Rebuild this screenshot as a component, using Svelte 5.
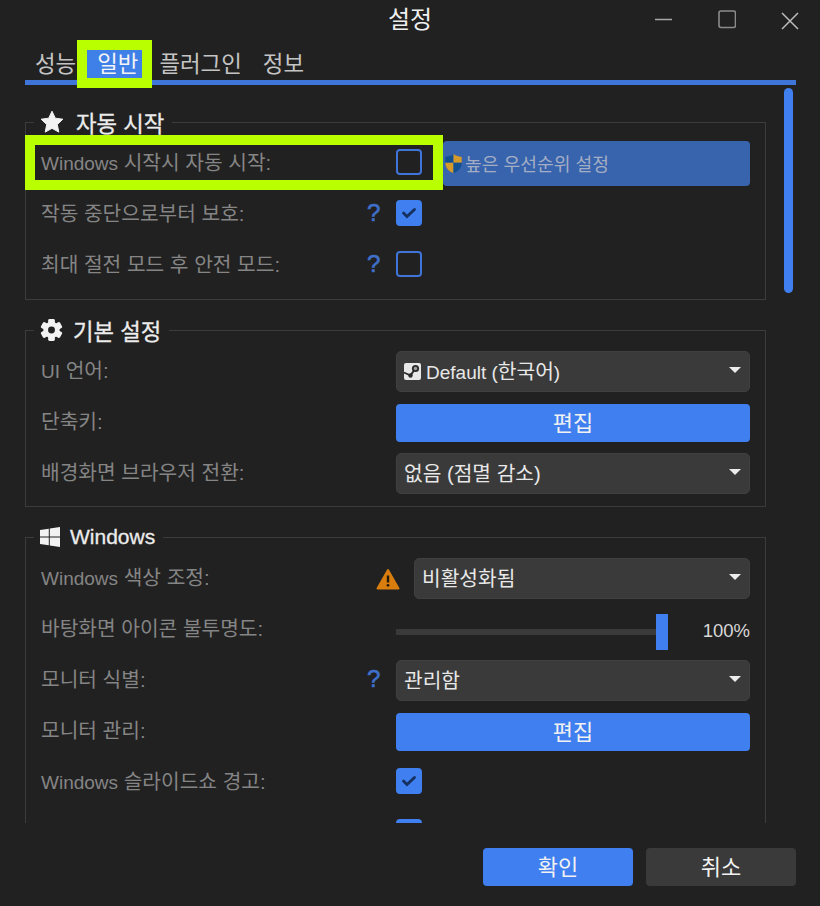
<script>
  const tabs = ["성능", "일반", "플러그인", "정보"]
  let active_tab = 1
</script>

<div class="window">
  <header class="titlebar">
    <span class="title">설정</span>
    <div class="window-buttons">
      <svg width="18" height="20" viewBox="0 0 18 20"><path d="M0 9.500h17" stroke="#a8a8a8" stroke-width="1.500" /></svg>
      <svg width="18" height="20" viewBox="-1 0 18 20"><rect x="0" y="1" width="16.500" height="16.500" rx="2" fill="none" stroke="#8c8c8c" stroke-width="1.600" /></svg>
      <svg width="18" height="20" viewBox="0 0 18 20"><path d="M1 3l16 16M17 3L1 19" stroke="#bdbdbd" stroke-width="1.500" /></svg>
    </div>
  </header>

  <nav class="tabs">
    {#each tabs as tab, i}
      <button class="tab" class:active={i === active_tab} onclick={() => (active_tab = i)}>{tab}</button>
    {/each}
    <span class="mark tab-mark"></span>
  </nav>

  <main class="content">
    <fieldset>
      <legend>
        <svg class="star" width="24" height="24" viewBox="0 0 24 24"><path fill="#f2f2f2" d="M12 1.200l3.300 7 7.600 1-5.600 5.300 1.500 7.600L12 18.300l-6.800 3.800 1.500-7.600L1.100 9.200l7.600-1z" stroke="#f2f2f2" stroke-width="1" stroke-linejoin="round" /></svg>
        자동 시작
      </legend>
      <span class="mark row-mark"></span>
      <div class="row">
        <span class="label"><span class="latin">Windows</span> 시작시 자동 시작:</span>
        <span></span>
        <div class="control spaced">
          <span class="check"></span>
          <button class="btn disabled">
            <svg class="shield" width="19" height="23" viewBox="0 0 22 24">
              <path fill="#12508f" d="M11 1C8 3 5 4 1.500 4.500V11H11z" />
              <path fill="#d49a2a" d="M11 1c3 2 6 3 9.500 3.500V11H11z" />
              <path fill="#d49a2a" d="M1.500 11c0 6 4 10 9.500 12V11z" />
              <path fill="#12508f" d="M20.500 11c0 6-4 10-9.500 12V11z" />
            </svg>
            <span>높은 우선순위 설정</span>
          </button>
        </div>
      </div>
      <div class="row">
        <span class="label">작동 중단으로부터 보호:</span>
        <span class="help">?</span>
        <div class="control"><span class="check on">{@render tick()}</span></div>
      </div>
      <div class="row">
        <span class="label">최대 절전 모드 후 안전 모드:</span>
        <span class="help">?</span>
        <div class="control"><span class="check"></span></div>
      </div>
    </fieldset>

    <fieldset class="tight">
      <legend>
        <svg class="gear" width="23" height="24" viewBox="0 0 24 24">
          {#each [0, 60, 120] as angle}
            <rect x="8.500" y="0.500" width="7" height="23" rx="1.500" fill="#f2f2f2" transform="rotate({angle} 12 12)" />
          {/each}
          <circle cx="12" cy="12" r="8.500" fill="#f2f2f2" />
          <circle cx="12" cy="12" r="3.600" fill="#212121" />
        </svg>
        기본 설정
      </legend>
      <div class="row">
        <span class="label"><span class="latin">UI</span> 언어:</span>
        <span></span>
        <div class="control">
          <div class="select">
            <svg width="17" height="17" viewBox="0 0 17 17">
              <rect width="17" height="17" rx="2" fill="#e8e8e8" />
              <path d="M0 9.500l6.500 3" stroke="#2b2b2b" stroke-width="1.600" />
              <path d="M6.500 12.500L11 6" stroke="#2b2b2b" stroke-width="2" />
              <circle cx="6.500" cy="12.500" r="2.200" fill="#2b2b2b" />
              <circle cx="11.500" cy="5.500" r="3.600" fill="#2b2b2b" />
              <circle cx="11.500" cy="5.500" r="1.700" fill="#a0a0a0" />
            </svg>
            <span class="value"><span class="latin">Default (</span>한국어<span class="latin">)</span></span>
          </div>
        </div>
      </div>
      <div class="row">
        <span class="label">단축키:</span>
        <span></span>
        <div class="control"><button class="btn">편집</button></div>
      </div>
      <div class="row">
        <span class="label">배경화면 브라우저 전환:</span>
        <span></span>
        <div class="control"><div class="select"><span class="value">없음 (점멸 감소)</span></div></div>
      </div>
    </fieldset>

    <fieldset>
      <legend>
        <svg width="20" height="20" viewBox="0 0 20 20"><path fill="#f2f2f2" d="M0 3l8.800-1.300v7.800H0zM9.800 1.600L20 0v9.500H9.800zM0 10.500h8.800v7.800L0 17zM9.800 10.500H20V20L9.800 18.400z" /></svg>
        <span class="legend-latin">Windows</span>
      </legend>
      <div class="row">
        <span class="label"><span class="latin">Windows</span> 색상 조정:</span>
        <div class="control warn-control">
          <svg width="24" height="22" viewBox="0 0 24 22"><path fill="#d97d0e" stroke="#d97d0e" stroke-width="2" stroke-linejoin="round" d="M12 2L1.500 20.500h21z" /><path stroke="#241a0c" stroke-width="2.400" d="M12 7.500v7" /><circle cx="12" cy="17.300" r="1.400" fill="#241a0c" /></svg>
          <div class="select"><span class="value">비활성화됨</span></div>
        </div>
      </div>
      <div class="row">
        <span class="label">바탕화면 아이콘 불투명도:</span>
        <span></span>
        <div class="control slider-control">
          <div class="slider"><span class="thumb"></span></div>
          <span class="percent">100%</span>
        </div>
      </div>
      <div class="row">
        <span class="label">모니터 식별:</span>
        <span class="help">?</span>
        <div class="control"><div class="select"><span class="value">관리함</span></div></div>
      </div>
      <div class="row">
        <span class="label">모니터 관리:</span>
        <span></span>
        <div class="control"><button class="btn">편집</button></div>
      </div>
      <div class="row">
        <span class="label"><span class="latin">Windows</span> 슬라이드쇼 경고:</span>
        <span></span>
        <div class="control"><span class="check on">{@render tick()}</span></div>
      </div>
      <div class="row">
        <span class="label"></span>
        <span></span>
        <div class="control"><span class="check on">{@render tick()}</span></div>
      </div>
    </fieldset>

    <span class="scrollbar"></span>
  </main>

  <footer class="footer">
    <button class="btn action">확인</button>
    <button class="btn action secondary">취소</button>
  </footer>
</div>

{#snippet tick()}
  <svg width="16" height="12" viewBox="0 0 16 12"><path d="M2.500 6l3.500 3.500L13.500 2.500" fill="none" stroke="#16305e" stroke-width="2.800" stroke-linecap="round" /></svg>
{/snippet}

<style>
  :global(body) {
    background: #212121;
  }

  .window {
    width: 820px;
    height: 906px;
    background: #212121;
    display: flex;
    flex-direction: column;
    font-family: "Liberation Sans", "Noto Sans CJK KR", sans-serif;
    font-size: 20.3px;
    color: #e6e6e6;
    overflow: hidden;
  }
  .latin {
    font-size: 19px;
  }

  /* TITLE */

  .titlebar {
    height: 40px;
    flex: none;
    position: relative;
    display: flex;
    justify-content: center;
    align-items: center;
  }
  .title {
    font-size: 24px;
    color: #efefef;
    margin-top: -5px;
  }
  .window-buttons {
    position: absolute;
    right: 21px;
    top: 10px;
    display: flex;
    gap: 45px;
  }

  /* TABS */

  .tabs {
    flex: none;
    position: relative;
    height: 45px;
    margin: 0 24px 0 25px;
    box-sizing: border-box;
    border-bottom: 5px solid #3f74d8;
    display: flex;
    gap: 1px;
    padding-top: 10px;
  }
  .tab {
    all: unset;
    font-size: 22.400px;
    line-height: 30px;
    height: 28px;
    padding: 0 10px;
    color: #c4c4c4;
  }
  .tab.active {
    background: #3f7fe8;
    color: #f4f4f4;
  }
  .mark {
    position: absolute;
    box-sizing: border-box;
    border: 10px solid #b9ff00;
    pointer-events: none;
    z-index: 2;
  }
  .tab-mark {
    left: 52px;
    top: 0;
    width: 75px;
    height: 48px;
  }

  /* CONTENT */

  .content {
    flex: 1;
    min-height: 0;
    position: relative;
    overflow: hidden;
    margin: 0 24px 0 25px;
    padding-top: 23px;
    display: flex;
    flex-direction: column;
    gap: 16px;
  }
  .scrollbar {
    position: absolute;
    left: 759px;
    top: 3px;
    width: 9px;
    height: 205px;
    border-radius: 5px;
    background: #3f7ff0;
  }
  fieldset {
    position: relative;
    flex: none;
    width: 741px;
    box-sizing: border-box;
    margin: 0;
    padding: 2px 15px 8px;
    border: 1px solid #3c3c3c;
    min-inline-size: 0;
  }
  fieldset.tight {
    padding-bottom: 7px;
  }
  legend {
    margin-left: -7px;
    padding: 0 8px 0 6px;
    height: 28px;
    display: flex;
    align-items: center;
    gap: 10px;
    font-size: 22.300px;
    color: #ececec;
    -webkit-text-stroke: 0.3px #ececec;
  }
  .star {
    margin-right: 2px;
  }
  .legend-latin {
    font-size: 21px;
  }
  .row {
    height: 51px;
    display: grid;
    grid-template-columns: 1fr 36px 354px;
    align-items: center;
  }
  .label {
    color: #858585;
    padding-bottom: 5px;
  }
  .help {
    color: #3f6fc8;
    font-size: 24px;
    -webkit-text-stroke: 0.6px #3f6fc8;
    text-align: left;
    padding-left: 7px;
    padding-bottom: 3px;
  }
  .control {
    display: flex;
    align-items: center;
    min-width: 0;
  }
  .spaced {
    gap: 21px;
  }
  .warn-control {
    grid-column: 2 / 4;
    justify-content: flex-end;
    gap: 14px;
  }
  .warn-control .select {
    flex: none;
    width: 336px;
  }
  .slider-control {
    justify-content: space-between;
  }

  /* CONTROLS */

  .check {
    flex: none;
    width: 26px;
    height: 26px;
    margin-bottom: 3px;
    box-sizing: border-box;
    border: 2px solid #3f74d8;
    border-radius: 4px;
    display: flex;
    align-items: center;
    justify-content: center;
  }
  .check.on {
    background: #3f7ff0;
    border-color: #3f7ff0;
  }
  .select {
    position: relative;
    flex: 1;
    height: 41px;
    box-sizing: border-box;
    background: #3a3a3a;
    border: 1px solid #404040;
    border-radius: 5px;
    display: flex;
    align-items: center;
    gap: 5px;
    padding-left: 7px;
  }
  .select::after {
    content: "";
    position: absolute;
    right: 8px;
    top: 15px;
    border-left: 6px solid transparent;
    border-right: 6px solid transparent;
    border-top: 6px solid #ececec;
  }
  .value {
    color: #e8e8e8;
    padding-bottom: 3px;
  }
  .btn {
    all: unset;
    flex: 1;
    height: 38px;
    box-sizing: border-box;
    background: #3f7ff0;
    border-radius: 4px;
    color: #f2f2f2;
    font-size: 22px;
    padding-bottom: 4px;
    display: flex;
    align-items: center;
    justify-content: center;
  }
  .btn.disabled {
    height: 45px;
    background: #3863ad;
    color: #a3aec4;
    font-size: 18.200px;
    padding-bottom: 2px;
    justify-content: flex-start;
  }
  .shield {
    flex: none;
    margin-left: 1px;
    margin-top: 2px;
    margin-right: 2px;
  }
  .slider {
    position: relative;
    width: 272px;
    height: 6px;
    margin-top: 4px;
    background: #3a3a3a;
  }
  .thumb {
    position: absolute;
    right: 0;
    top: -15px;
    width: 12px;
    height: 36px;
    background: #3f7ff0;
  }
  .percent {
    font-size: 18.500px;
    color: #d8d8d8;
    padding-top: 2px;
  }
  .row-mark {
    left: -1px;
    top: -1px;
    width: 418px;
    height: 55px;
  }

  /* FOOTER */

  .footer {
    flex: none;
    height: 83px;
    box-sizing: border-box;
    padding: 25px 24px 0 0;
    display: flex;
    justify-content: flex-end;
    gap: 13px;
  }
  .action {
    flex: none;
    width: 150px;
  }
  .secondary {
    background: #3a3a3a;
  }
</style>
